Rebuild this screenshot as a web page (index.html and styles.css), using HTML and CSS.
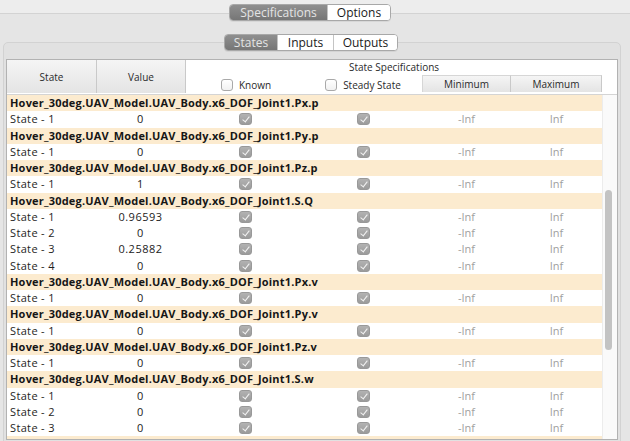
FILE: index.html
```html
<!DOCTYPE html>
<html>
<head>
<meta charset="utf-8">
<link rel="stylesheet" href="styles.css">
</head>
<body>
<div class="app">
  <div class="tabs tabs-outer">
    <div class="seg">
      <span class="seg-item sel w-spec">Specifications</span>
      <span class="seg-item w-opt">Options</span>
    </div>
  </div>
  <div class="outer-box">
    <div class="tabs tabs-inner">
      <div class="seg">
        <span class="seg-item sel w-states">States</span>
        <span class="seg-item w-inputs">Inputs</span>
        <span class="seg-item w-outputs">Outputs</span>
      </div>
    </div>
    <div class="inner-box">
      <div class="table">
        <div class="thead">
          <div class="th th-state">State</div>
          <div class="th th-value">Value</div>
          <div class="th-title">State Specifications</div>
          <div class="th-check th-known"><span class="box"></span>Known</div>
          <div class="th-check th-steady"><span class="box"></span>Steady State</div>
          <div class="th th-min">Minimum</div>
          <div class="th th-max">Maximum</div>
          <div class="th-fill"></div>
        </div>
        <div class="tbody-wrap">
          <div class="tbody">
            <div class="row group">Hover_30deg.UAV_Model.UAV_Body.x6_DOF_Joint1.Px.p</div>
            <div class="row"><span class="c-state">State - 1</span><span class="c-val">0</span><span class="c-chk"><span class="chk"></span></span><span class="c-chk"><span class="chk"></span></span><span class="c-inf">-Inf</span><span class="c-inf">Inf</span></div>
            <div class="row group">Hover_30deg.UAV_Model.UAV_Body.x6_DOF_Joint1.Py.p</div>
            <div class="row"><span class="c-state">State - 1</span><span class="c-val">0</span><span class="c-chk"><span class="chk"></span></span><span class="c-chk"><span class="chk"></span></span><span class="c-inf">-Inf</span><span class="c-inf">Inf</span></div>
            <div class="row group">Hover_30deg.UAV_Model.UAV_Body.x6_DOF_Joint1.Pz.p</div>
            <div class="row"><span class="c-state">State - 1</span><span class="c-val">1</span><span class="c-chk"><span class="chk"></span></span><span class="c-chk"><span class="chk"></span></span><span class="c-inf">-Inf</span><span class="c-inf">Inf</span></div>
            <div class="row group">Hover_30deg.UAV_Model.UAV_Body.x6_DOF_Joint1.S.Q</div>
            <div class="row"><span class="c-state">State - 1</span><span class="c-val">0.96593</span><span class="c-chk"><span class="chk"></span></span><span class="c-chk"><span class="chk"></span></span><span class="c-inf">-Inf</span><span class="c-inf">Inf</span></div>
            <div class="row"><span class="c-state">State - 2</span><span class="c-val">0</span><span class="c-chk"><span class="chk"></span></span><span class="c-chk"><span class="chk"></span></span><span class="c-inf">-Inf</span><span class="c-inf">Inf</span></div>
            <div class="row"><span class="c-state">State - 3</span><span class="c-val">0.25882</span><span class="c-chk"><span class="chk"></span></span><span class="c-chk"><span class="chk"></span></span><span class="c-inf">-Inf</span><span class="c-inf">Inf</span></div>
            <div class="row"><span class="c-state">State - 4</span><span class="c-val">0</span><span class="c-chk"><span class="chk"></span></span><span class="c-chk"><span class="chk"></span></span><span class="c-inf">-Inf</span><span class="c-inf">Inf</span></div>
            <div class="row group">Hover_30deg.UAV_Model.UAV_Body.x6_DOF_Joint1.Px.v</div>
            <div class="row"><span class="c-state">State - 1</span><span class="c-val">0</span><span class="c-chk"><span class="chk"></span></span><span class="c-chk"><span class="chk"></span></span><span class="c-inf">-Inf</span><span class="c-inf">Inf</span></div>
            <div class="row group">Hover_30deg.UAV_Model.UAV_Body.x6_DOF_Joint1.Py.v</div>
            <div class="row"><span class="c-state">State - 1</span><span class="c-val">0</span><span class="c-chk"><span class="chk"></span></span><span class="c-chk"><span class="chk"></span></span><span class="c-inf">-Inf</span><span class="c-inf">Inf</span></div>
            <div class="row group">Hover_30deg.UAV_Model.UAV_Body.x6_DOF_Joint1.Pz.v</div>
            <div class="row"><span class="c-state">State - 1</span><span class="c-val">0</span><span class="c-chk"><span class="chk"></span></span><span class="c-chk"><span class="chk"></span></span><span class="c-inf">-Inf</span><span class="c-inf">Inf</span></div>
            <div class="row group">Hover_30deg.UAV_Model.UAV_Body.x6_DOF_Joint1.S.w</div>
            <div class="row"><span class="c-state">State - 1</span><span class="c-val">0</span><span class="c-chk"><span class="chk"></span></span><span class="c-chk"><span class="chk"></span></span><span class="c-inf">-Inf</span><span class="c-inf">Inf</span></div>
            <div class="row"><span class="c-state">State - 2</span><span class="c-val">0</span><span class="c-chk"><span class="chk"></span></span><span class="c-chk"><span class="chk"></span></span><span class="c-inf">-Inf</span><span class="c-inf">Inf</span></div>
            <div class="row"><span class="c-state">State - 3</span><span class="c-val">0</span><span class="c-chk"><span class="chk"></span></span><span class="c-chk"><span class="chk"></span></span><span class="c-inf">-Inf</span><span class="c-inf">Inf</span></div>
            <div class="row group"></div>
          </div>
          <div class="scroll"><div class="thumb"></div></div>
        </div>
      </div>
    </div>
  </div>
</div>
</body>
</html>
```

FILE: styles.css
```css
html, body {
  margin: 0;
  padding: 0;
  width: 630px;
  height: 441px;
  overflow: hidden;
}
body {
  font-family: "Open Sans", "DejaVu Sans", sans-serif;
  color: #1e1e1e;
  background: #ededed;
}
.app {
  width: 630px;
  height: 441px;
  padding-top: 4px;
  box-sizing: border-box;
  overflow: hidden;
}
.tabs {
  display: flex;
  position: relative;
  z-index: 1;
}
.tabs-outer { padding-left: 229px; }
.tabs-inner { padding-left: 224px; }
.seg {
  display: flex;
  height: 17px;
  box-sizing: border-box;
  border: 1px solid #a8a8a8;
  border-radius: 4px;
  overflow: hidden;
  background: #fff;
  box-shadow: 0 1px 0 rgba(0,0,0,0.06);
}
.seg-item {
  display: block;
  box-sizing: border-box;
  font-size: 12px;
  line-height: 15px;
  text-align: center;
  color: #1a1a1a;
  background: #fff;
  border-left: 1px solid #c4c4c4;
}
.seg-item:first-child { border-left: 0; }
.seg-item.sel {
  background: linear-gradient(#8f8f8f, #767676);
  color: #e4e4e4;
}
.w-spec { width: 97px; }
.w-opt { width: 63px; }
.w-states { width: 52px; }
.w-inputs { width: 56px; }
.w-outputs { width: 64px; }

.outer-box {
  margin-top: -8px;
  border-top: 1px solid #d3d3d3;
  background: #e5e5e5;
  padding-top: 20px;
  height: 430px;
}
.inner-box {
  margin: -9px 9px 0 3px;
  border: 1px solid #d2d2d2;
  border-radius: 5px;
  background: #e1e1e1;
  padding: 16px 2px 0 2px;
  height: 420px;
}
.table {
  border: 1px solid #b2b2b2;
  background: #fff;
}
.thead {
  display: grid;
  grid-template-columns: 90px 89px 118px 118px 89px 91px 15px;
  grid-template-rows: 15px 19px;
  border-bottom: 1px solid #d4d4d4;
  font-size: 10px;
  color: #2a2a2a;
}
.th {
  display: flex;
  align-items: center;
  justify-content: center;
  background: linear-gradient(#f5f5f5, #e4e4e4);
  border-right: 1px solid #c9c9c9;
  box-sizing: border-box;
}
.th-state { grid-column: 1; grid-row: 1 / 3; margin-bottom: 1px; }
.th-value { grid-column: 2; grid-row: 1 / 3; margin-bottom: 1px; }
.th-title {
  grid-column: 3 / 8;
  grid-row: 1;
  text-align: center;
  line-height: 15px;
  padding-right: 15px;
}
.th-check {
  display: flex;
  align-items: center;
  justify-content: center;
  gap: 6px;
  font-size: 10px;
}
.th-known { grid-column: 3; grid-row: 2; padding-left: 2px; }
.th-steady { grid-column: 4; grid-row: 2; }
.th-check .box {
  width: 12px;
  height: 12px;
  box-sizing: border-box;
  border: 1px solid #a9a9a9;
  border-radius: 3px;
  background: linear-gradient(#ffffff, #f1f1f1);
}
.th-min { grid-column: 5; grid-row: 2; margin-bottom: 2px; border-top: 1px solid #d6d6d6; border-left: 1px solid #d6d6d6; }
.th-max { grid-column: 6; grid-row: 2; margin-bottom: 2px; border-top: 1px solid #d6d6d6; }
.th-fill { grid-column: 7; grid-row: 2; }

.tbody-wrap {
  display: flex;
  height: 344px;
  overflow: hidden;
}
.tbody {
  width: 595px;
  flex: none;
}
.row {
  display: grid;
  grid-template-columns: 90px 89px 118px 118px 89px 91px;
  height: 16.25px;
  line-height: 16.25px;
  font-size: 11px;
  white-space: nowrap;
}
.row.group {
  display: block;
  background: #fcebcf;
  font-weight: 700;
  padding-left: 3px;
  color: #161616;
  letter-spacing: 0.2px;
}
.c-state { padding-left: 3px; color: #1e1e1e; letter-spacing: 0.35px; }
.c-val { text-align: center; padding-right: 2px; color: #222; letter-spacing: 0.5px; }
.c-chk {
  display: flex;
  align-items: center;
  justify-content: center;
}
.chk {
  position: relative;
  width: 13px;
  height: 12px;
  border-radius: 3px;
  background: linear-gradient(#b2b2b2, #9b9b9b);
  box-sizing: border-box;
  border: 1px solid #999;
}
.chk::after {
  content: "";
  position: absolute;
  left: 4px;
  top: 1px;
  width: 3px;
  height: 6px;
  border: solid #f2f2f2;
  border-width: 0 1.5px 1.5px 0;
  transform: rotate(38deg);
}
.c-inf { text-align: center; color: #a0a0a0; }

.scroll {
  width: 15px;
  flex: none;
  box-sizing: border-box;
  background: #fafafa;
  border-left: 1px solid #ececec;
  padding-top: 95px;
  padding-left: 2px;
}
.thumb {
  width: 7px;
  height: 160px;
  border-radius: 4px;
  background: #c3c3c3;
}
```
